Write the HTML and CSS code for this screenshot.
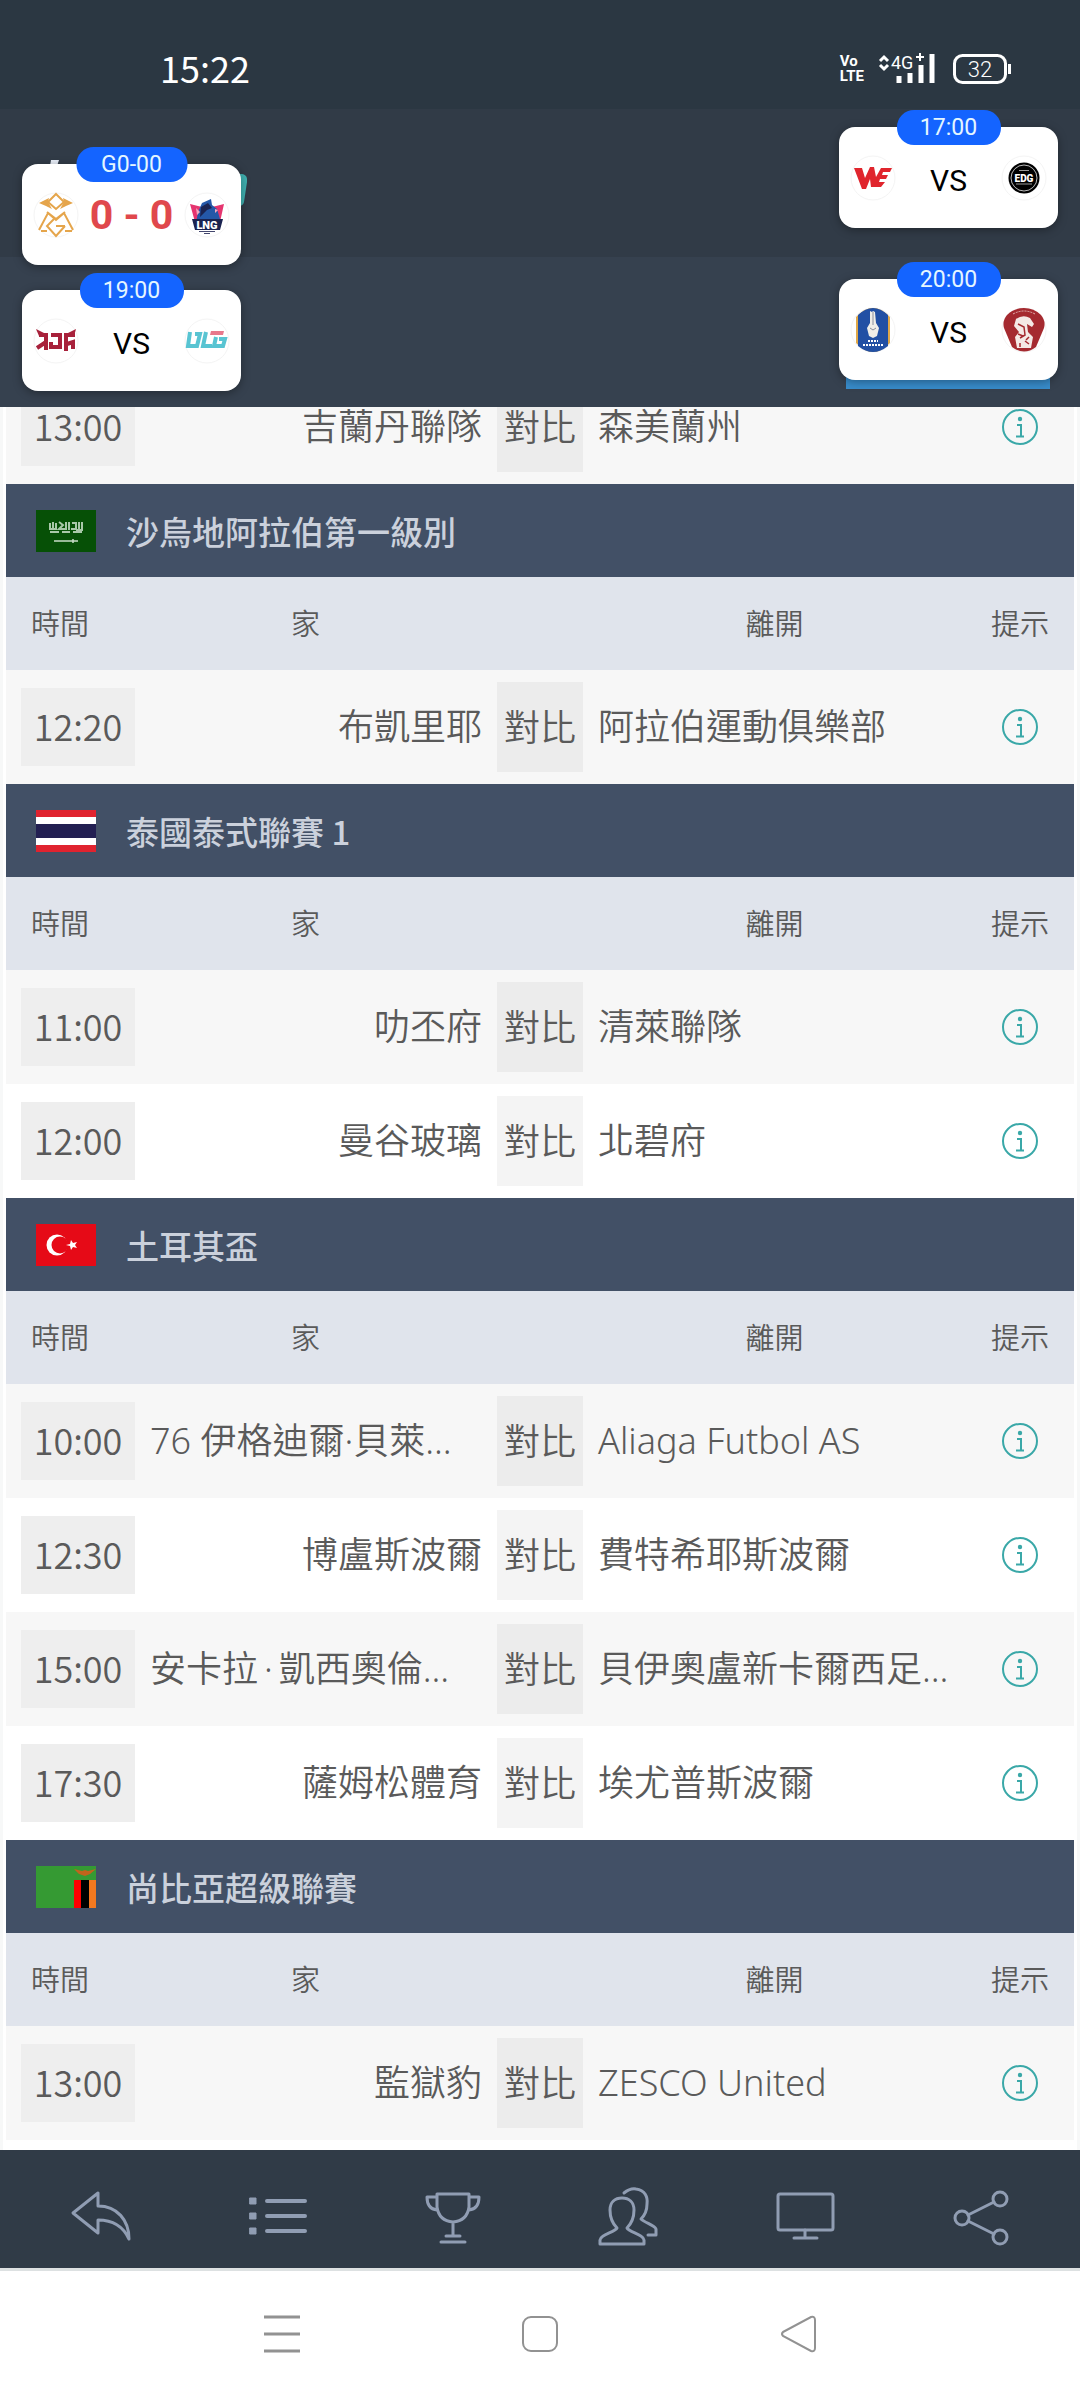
FILE: index.html
```html
<!DOCTYPE html>
<html lang="zh-Hant">
<head>
<meta charset="utf-8">
<meta name="viewport" content="width=device-width, initial-scale=1">
<title>賽程</title>
<link rel="stylesheet" href="styles.css">
</head>

<body>

<!-- shared icons -->
<svg class="sprite" aria-hidden="true">
<symbol id="icon-info" viewBox="0 0 38 38">
<circle cx="19" cy="19" r="17"/>
<path d="M16 17h4v11M15 28.500h8"/>
<circle class="dot" cx="19" cy="11" r="2.200"/>
</symbol>
</svg>

<header class="top">
<div class="status">
<span class="clock">15:22</span>
<div class="status-icons">
<span class="volte"><span>Vo</span><span>LTE</span></span>
<svg class="signal" width="60" height="34" viewBox="0 0 60 34">
<path class="line" d="M2 9l4-4 4 4M2 13l4 4 4-4"/>
<text x="13" y="17">4G</text>
<path class="thin" d="M38 5h8M42 1v8"/>
<path class="bar" d="M21 24v7M32 21v10M43 13v18M54 2v29"/>
</svg>
<svg class="battery" width="60" height="34" viewBox="0 0 60 34">
<rect x="2.500" y="3.500" width="51" height="27" rx="8"/>
<path d="M57.500 12v10"/>
<text x="28" y="25" text-anchor="middle">32</text>
</svg>
</div>
</div>
<div class="title-bar">
<svg class="brand" width="200" height="60" viewBox="0 0 200 60">
<path fill="#e8eef8" d="M3 6l1-6h8l-2 6z"/>
<path fill="#3fb0b0" d="M186 14h9q6 1 5 8l-3 20q-1 4-5 4h-6z"/>
</svg>
</div>
<div class="sub-bar"></div>

<!-- floating score cards -->
<div class="card card-a">
<span class="pill pill-wide">G0-00</span>
<svg class="logo" viewBox="0 0 46 46">
<circle class="ring" cx="23" cy="23" r="22"/>
<g fill="none" stroke="#e5a54b" stroke-width="2">
<path d="M23 2l8 8-8 7-8-7z"/>
<path d="M6 38l9-17 8 7 8-7 9 17M14 20l9 7 9-7M8 39h6M32 39h7"/>
<path d="M32 34l-9 10-9-10 7-7M23 34h9"/>
</g>
<path fill="#e5a54b" d="M6 11l10-5-1 4 4 7-6-3zM40 11L30 6l1 4-4 7 6-3z"/>
</svg>
<span class="score">0 - 0</span>
<svg class="logo" viewBox="0 0 46 46">
<circle class="ring" cx="23" cy="23" r="22"/>
<path fill="#e5356f" d="M6 12l12 3-2 14-5 1zM40 12l-12 3 3 14 5 1z"/>
<path fill="#2458a8" d="M14 20l4-9 9-4 1 6 5 4 3 10-3 4H12z"/>
<path fill="#1a2350" d="M17 15l7-4 4 5-5 2-7 7zM8 27h31l-3 11H11z"/>
<path fill="#f2a9c0" d="M12 16l4 4-3 3zM31 17l3 1-3 3z"/>
<text class="mark" x="23" y="37" fill="#fff" font-size="11">LNG</text>
<path stroke="#44476e" d="M15 39.500h16M20 41.500h6"/>
</svg>
</div>

<div class="card card-b">
<span class="pill">19:00</span>
<svg class="logo" viewBox="0 0 46 46">
<circle class="ring" cx="23" cy="23" r="22"/>
<g fill="none" stroke="#a8213b" stroke-width="4">
<path d="M6 17h7v15M13 24L4 30M18 17h9v12h-9v-5M42 17h-9v16M34 26l6-2v7"/>
</g>
<path fill="#a8213b" d="M3 11l8 4v3H6zM43 11l-8 4v3h6z"/>
</svg>
<span class="versus">VS</span>
<svg class="logo" viewBox="0 0 46 46">
<circle class="ring" cx="23" cy="23" r="22"/>
<g fill="none" stroke="#58c4d2" stroke-width="4">
<path d="M6 14L4 28h9l3-12h-5M22 14l-3 14h9M32 19l-2 9h9l2-7h-6"/>
</g>
<path fill="#e8788c" d="M27 13h13l-1 4H26z"/>
</svg>
</div>

<div class="card card-c">
<span class="pill">17:00</span>
<svg class="logo" viewBox="0 0 46 46">
<circle class="ring" cx="23" cy="23" r="22"/>
<path fill="#e0252d" d="M4 13h8l3 10 5-11h4l2 10 5-9h11l-2 4h-7l-1 3h6l-2 4h-6l-1 3h6l-4 5H21l-1-8-4 10h-4z"/>
</svg>
<span class="versus">VS</span>
<svg class="logo" viewBox="0 0 46 46">
<circle class="ring" cx="23" cy="23" r="22"/>
<circle cx="23" cy="23" r="15.500"/>
<circle cx="23" cy="23" r="13" fill="none" stroke="#bbb"/>
<path stroke="#999" d="M18 15.500h10M15 29h16"/>
<text class="mark" x="23" y="27" fill="#fff" font-size="10">EDG</text>
</svg>
</div>

<div class="card card-d">
<span class="pill">20:00</span>
<svg class="logo" viewBox="0 0 46 46">
<circle class="ring" cx="23" cy="23" r="22"/>
<path fill="#e0a848" d="M6 10q17-18 34 0v26q-17 18-34 0z"/>
<path fill="#2250a4" d="M8 8q15-14 30 0v31q-15 12-30 0z"/>
<path fill="#f0eee8" d="M20 4l2 1 1-1 2 1 1 11 3 5-2 8-4 2-4-2-2-8 3-5z"/>
<path fill="none" stroke="#8a8f9c" d="M23 5v13M20 21l3 2 3-2"/>
<path stroke="#fff" stroke-width="2" stroke-dasharray="2 1" d="M18 34h10M13 38h20"/>
</svg>
<span class="versus">VS</span>
<svg class="logo" viewBox="0 0 46 46">
<circle class="ring" cx="23" cy="23" r="22"/>
<path fill="#a52a30" d="M23 1q10 0 17 7 5 6 3 13l-8 19q-12 9-24 0L3 21Q1 14 6 8q7-7 17-7z"/>
<path fill="#f4e9e6" d="M15 12q7-5 14-1l4 6-2 3-5-3 1 8 5 5-2 11H16l-2-11 4-5-5-6z"/>
<path fill="none" stroke="#a52a30" stroke-width="1.500" d="M17 17l6 3 1 8-5 3M17 27l5 2M24 34l4 3M19 36v4M28 30l-3 3"/>
<path fill="none" stroke="#e4b5b4" stroke-dasharray="2 1" d="M12 7q11-6 22 0"/>
</svg>
</div>
<div class="strip"></div>
</header>

<main class="list">

<table class="games">
<colgroup><col class="c-tip"><col class="c-gap"><col class="c-home"><col class="c-vs"><col><col class="c-tip"></colgroup>
<tbody>
<tr>
<td class="time" colspan="2"><span>13:00</span></td>
<td class="home">吉蘭丹聯隊</td>
<td class="vs"><span>對比</span></td>
<td class="away">森美蘭州</td>
<td class="tip"><button type="button" aria-label="提示"><svg><use href="#icon-info"/></svg></button></td>
</tr>
</tbody>
</table>

<h2 class="league">
<svg class="flag" viewBox="0 0 60 42">
<path fill="#065006" d="M0 0h60v42H0z"/>
<path fill="none" stroke="#a9c8a9" stroke-width="2" d="M14 13v6h6v-6M17 12v8M23 12l4 3-4 4h7v-7M33 12v8M36 13h4v6h-5M43 12v8M46 12v8h-6M14 22h9M26 22h8M37 22h9"/>
<path stroke="#c9dcc9" stroke-width="1.500" d="M18 31h24M37 29v4"/>
</svg>
沙烏地阿拉伯第一級別
</h2>
<table class="games">
<colgroup><col class="c-tip"><col class="c-gap"><col class="c-home"><col class="c-vs"><col><col class="c-tip"></colgroup>
<thead>
<tr><th>時間</th><th colspan="2">家</th><th></th><th>離開</th><th>提示</th></tr>
</thead>
<tbody>
<tr>
<td class="time" colspan="2"><span>12:20</span></td>
<td class="home">布凱里耶</td>
<td class="vs"><span>對比</span></td>
<td class="away">阿拉伯運動俱樂部</td>
<td class="tip"><button type="button" aria-label="提示"><svg><use href="#icon-info"/></svg></button></td>
</tr>
</tbody>
</table>

<h2 class="league">
<svg class="flag" viewBox="0 0 60 42">
<path fill="#e0232f" d="M0 0h60v42H0z"/>
<path fill="#fff" d="M0 7h60v28H0z"/>
<path fill="#221f52" d="M0 14h60v14H0z"/>
</svg>
泰國泰式聯賽 1
</h2>
<table class="games">
<colgroup><col class="c-tip"><col class="c-gap"><col class="c-home"><col class="c-vs"><col><col class="c-tip"></colgroup>
<thead>
<tr><th>時間</th><th colspan="2">家</th><th></th><th>離開</th><th>提示</th></tr>
</thead>
<tbody>
<tr>
<td class="time" colspan="2"><span>11:00</span></td>
<td class="home">叻丕府</td>
<td class="vs"><span>對比</span></td>
<td class="away">清萊聯隊</td>
<td class="tip"><button type="button" aria-label="提示"><svg><use href="#icon-info"/></svg></button></td>
</tr>
<tr>
<td class="time" colspan="2"><span>12:00</span></td>
<td class="home">曼谷玻璃</td>
<td class="vs"><span>對比</span></td>
<td class="away">北碧府</td>
<td class="tip"><button type="button" aria-label="提示"><svg><use href="#icon-info"/></svg></button></td>
</tr>
</tbody>
</table>

<h2 class="league">
<svg class="flag" viewBox="0 0 60 42">
<path fill="#e60a17" d="M0 0h60v42H0z"/>
<circle cx="21" cy="21" r="10.500" fill="#fff"/>
<circle cx="24" cy="21" r="8.500" fill="#e60a17"/>
<path fill="#fff" d="M30 21l4-1 1-4 2 3 4-1-2 3 2 3-4-1-2 3-1-4z"/>
</svg>
土耳其盃
</h2>
<table class="games">
<colgroup><col class="c-tip"><col class="c-gap"><col class="c-home"><col class="c-vs"><col><col class="c-tip"></colgroup>
<thead>
<tr><th>時間</th><th colspan="2">家</th><th></th><th>離開</th><th>提示</th></tr>
</thead>
<tbody>
<tr>
<td class="time" colspan="2"><span>10:00</span></td>
<td class="home">76 伊格迪爾·貝萊迪耶</td>
<td class="vs"><span>對比</span></td>
<td class="away">Aliaga Futbol AS</td>
<td class="tip"><button type="button" aria-label="提示"><svg><use href="#icon-info"/></svg></button></td>
</tr>
<tr>
<td class="time" colspan="2"><span>12:30</span></td>
<td class="home">博盧斯波爾</td>
<td class="vs"><span>對比</span></td>
<td class="away">費特希耶斯波爾</td>
<td class="tip"><button type="button" aria-label="提示"><svg><use href="#icon-info"/></svg></button></td>
</tr>
<tr>
<td class="time" colspan="2"><span>15:00</span></td>
<td class="home">安卡拉&thinsp;·&thinsp;凱西奧倫居庫</td>
<td class="vs"><span>對比</span></td>
<td class="away">貝伊奧盧新卡爾西足球會</td>
<td class="tip"><button type="button" aria-label="提示"><svg><use href="#icon-info"/></svg></button></td>
</tr>
<tr>
<td class="time" colspan="2"><span>17:30</span></td>
<td class="home">薩姆松體育</td>
<td class="vs"><span>對比</span></td>
<td class="away">埃尤普斯波爾</td>
<td class="tip"><button type="button" aria-label="提示"><svg><use href="#icon-info"/></svg></button></td>
</tr>
</tbody>
</table>

<h2 class="league">
<svg class="flag" viewBox="0 0 60 42">
<path fill="#359a33" d="M0 0h60v42H0z"/>
<path fill="#f00" d="M38 14h7v28h-7z"/>
<path d="M45 14h8v28h-8z"/>
<path fill="#f4791f" d="M53 14h7v28h-7z"/>
<path fill="#c0641c" d="M38 3l8 2 3-1 3 1 8-2-6 5-5 2-6-2z"/>
</svg>
尚比亞超級聯賽
</h2>
<table class="games">
<colgroup><col class="c-tip"><col class="c-gap"><col class="c-home"><col class="c-vs"><col><col class="c-tip"></colgroup>
<thead>
<tr><th>時間</th><th colspan="2">家</th><th></th><th>離開</th><th>提示</th></tr>
</thead>
<tbody>
<tr>
<td class="time" colspan="2"><span>13:00</span></td>
<td class="home">監獄豹</td>
<td class="vs"><span>對比</span></td>
<td class="away">ZESCO United</td>
<td class="tip"><button type="button" aria-label="提示"><svg><use href="#icon-info"/></svg></button></td>
</tr>
</tbody>
</table>

</main>

<nav class="tabs">
<a href="#" aria-label="返回"><svg viewBox="0 0 60 60"><path d="M2 25L27 5v13c19 0 31 14 31 33C52 38 41 32 27 32v13z"/></svg></a>
<a href="#" aria-label="列表"><svg viewBox="0 0 60 60"><path d="M20 13h38M20 28h38M20 43h38" stroke-width="4"/><path class="solid" d="M3 10h6v6H3zM3 25h6v6H3zM3 40h6v6H3z"/></svg></a>
<a href="#" aria-label="獎盃"><svg viewBox="0 0 60 60"><path d="M15 6h32v13q-2 14-16 15-14-1-16-15zM15 9H5q0 12 10 13M47 9h10q0 12-10 13M31 34v14M24 48h14M19 54h24"/></svg></a>
<a href="#" aria-label="隊伍"><svg viewBox="0 0 60 60"><path d="M19 40c-5-5-7-11-7-18 0-8 5-12 12-12s12 4 12 12c0 7-2 13-7 18 2 4 17 7 17 12v4H2v-4c0-5 15-8 17-12z"/><path d="M26 5q6-5 12-4c9 1 12 8 11 15 0 6-1 10-6 15 4 4 16 7 15 11v5h-8"/></svg></a>
<a href="#" aria-label="直播"><svg viewBox="0 0 60 60"><rect x="4" y="6" width="55" height="36" rx="2"/><path d="M31 42v8M20 50h23"/></svg></a>
<a href="#" aria-label="分享"><svg viewBox="0 0 60 60"><circle cx="13" cy="30" r="7"/><circle cx="51" cy="11" r="7"/><circle cx="51" cy="49" r="7"/><path d="M19 27l26-13M19 33l26 13"/></svg></a>
</nav>

<div class="system">
<button type="button" aria-label="最近"><svg viewBox="0 0 40 40"><path d="M2 3h36M2 20h36M2 37h36" stroke-width="3"/></svg></button>
<button type="button" aria-label="主頁"><svg viewBox="0 0 40 40"><rect x="3" y="3" width="34" height="34" rx="8"/></svg></button>
<button type="button" aria-label="後退"><svg viewBox="0 0 40 40"><path d="M5 18L33 3q4-1 4 3v28q0 4-4 3L5 22q-2-2 0-4z"/></svg></button>
</div>

</body>
</html>
```

FILE: styles.css
```css
* {
box-sizing: border-box;
}

body {
margin: 0;
min-height: 100vh;
display: flex;
flex-direction: column;
background: #fff;
color: #5a5a5a;
font-family: "Noto Sans CJK TC", "Noto Sans", sans-serif;
font-weight: 350;
}

button {
padding: 0;
border: 0;
background: none;
cursor: pointer;
}

.sprite {
display: none;
}

/* top area */

.top {
position: relative;
z-index: 2;
}

.status {
height: 109px;
padding: 28px 68px 0 160px;
display: flex;
justify-content: space-between;
align-items: center;
background: #2b3742;
color: #fff;
}

.clock {
padding-bottom: 4px;
font-size: 36px;
font-weight: 400;
}

.status-icons {
display: flex;
align-items: center;
}

.volte {
margin-right: 14px;
font: 700 15px/15px "Liberation Sans Narrow", Roboto, sans-serif;
}

.volte span {
display: block;
}

.signal {
margin-right: 14px;
font: 400 18px Roboto, sans-serif;
fill: #fff;
}

.signal path {
fill: none;
stroke: #fff;
stroke-width: 3;
}

.signal .thin {
stroke-width: 2;
}

.signal .bar {
stroke-width: 5;
}

.battery {
fill: #fff;
font: 300 22px Roboto, sans-serif;
}

.battery rect,
.battery path {
fill: none;
stroke: #fff;
stroke-width: 3;
}

.title-bar {
height: 148px;
padding: 51px 47px;
background: #313b47;
}

.brand {
display: block;
}

.sub-bar {
height: 150px;
background: #36414f;
}

.card {
position: absolute;
z-index: 1;
width: 219px;
height: 101px;
padding: 0 11px;
display: flex;
justify-content: space-between;
align-items: center;
border-radius: 16px;
background: #fff;
color: #000;
font-family: Roboto, sans-serif;
box-shadow: 0 2px 10px rgba(0, 0, 0, .35);
}

.card-a {
left: 22px;
top: 164px;
}

.card-b {
left: 22px;
top: 290px;
}

.card-c {
right: 22px;
top: 127px;
}

.card-d {
right: 22px;
top: 279px;
}

.strip {
position: absolute;
right: 30px;
top: 370px;
width: 204px;
height: 19px;
background: #388ccb;
}

.pill {
position: absolute;
left: 50%;
top: -17px;
width: 104px;
transform: translateX(-50%);
border-radius: 17px;
background: #1464ff;
color: #e4f6ff;
font-size: 23px;
font-weight: 400;
line-height: 35px;
text-align: center;
}

.pill-wide {
width: 111px;
}

.score {
color: #e0484c;
font-size: 41px;
font-weight: 700;
}

.versus {
padding-top: 6px;
font-size: 30px;
font-weight: 400;
}

.logo {
width: 46px;
height: 46px;
}

.logo .ring {
fill: #fff;
stroke: #f4f4f4;
}

.logo .mark {
font-family: Roboto, sans-serif;
font-weight: 900;
text-anchor: middle;
}

/* fixtures, first row slides under the top area */

.list {
flex: 1;
margin-top: -37px;
padding: 0 3px 10px;
border: solid #f7f8f8;
border-width: 0 3px;
}

.league {
height: 93px;
margin: 0;
padding: 0 30px;
display: flex;
align-items: center;
gap: 30px;
background: #425066;
color: #cbd1dc;
font-size: 33px;
font-weight: 500;
}

.flag {
width: 60px;
height: 42px;
}

.games {
width: 100%;
table-layout: fixed;
border-collapse: collapse;
}

.c-tip {
width: 108px;
}

.c-gap {
width: 36px;
}

.c-home {
width: 32.5%;
}

.c-vs {
width: 86px;
}

.games th {
height: 93px;
padding: 0 0 4px;
background: #e0e4ec;
font-size: 29px;
font-weight: 350;
text-align: center;
}

.games td {
height: 114px;
padding: 0;
font-size: 36px;
}

.games tbody tr:nth-child(odd) {
background: #f7f7f7;
}

.games .time {
padding: 0 15px;
}

.time span,
.vs span {
display: block;
padding-bottom: 4px;
background: #eee;
line-height: 74px;
text-align: center;
}

.vs span {
background: rgba(0, 0, 0, .045);
line-height: 86px;
}

.home,
.away {
overflow: hidden;
font-family: "Noto Sans", "Noto Sans CJK TC", sans-serif;
line-height: 54px;
white-space: nowrap;
text-overflow: ellipsis;
}

.games .home {
padding-right: 15px;
text-align: right;
}

.games .away {
padding-left: 15px;
}

.tip {
text-align: center;
}

.tip button {
display: block;
width: 38px;
height: 38px;
margin: 0 auto;
}

.tip svg {
display: block;
width: 38px;
height: 38px;
fill: none;
stroke: #3aa8a8;
stroke-width: 2;
}

.tip .dot,
.dot {
fill: #3aa8a8;
stroke: none;
}

/* bottom bars */

.tabs {
position: relative;
z-index: 1;
height: 121px;
padding: 23px 13px 0;
display: flex;
align-items: center;
background: #303b47;
border-bottom: 3px solid #dde1e2;
}

.tabs a {
flex: 1;
text-align: center;
}

.tabs svg {
width: 60px;
height: 60px;
overflow: visible;
fill: none;
stroke: #909db3;
stroke-width: 3;
stroke-linejoin: round;
stroke-linecap: round;
}

.tabs .solid {
fill: #909db3;
stroke-width: 1;
}

.system {
height: 129px;
padding: 0 153px;
display: flex;
align-items: center;
background: #fff;
}

.system button {
flex: 1;
}

.system svg {
width: 40px;
height: 40px;
fill: none;
stroke: #929292;
stroke-width: 2;
}
```
